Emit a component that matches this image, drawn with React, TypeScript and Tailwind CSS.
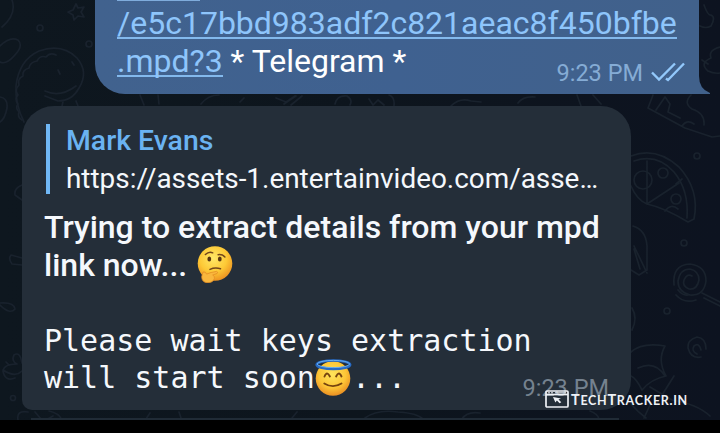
import React from "react";

function Doodles() {
  return (
    <svg className="absolute inset-0" width="720" height="420" viewBox="0 0 720 420" fill="none" stroke="#19222d" strokeWidth="1.7" strokeLinecap="round" strokeLinejoin="round">
      {/* left edge */}
      <path d="M12 0Q17 14 2 27" />
      <path d="M76 4l2 4 6-1-3 5 3 5-6-1-4 4-1-5-5-3 5-2z" />
      <circle cx="40" cy="28" r="3" />
      <circle cx="89" cy="44" r="3" />
      <path d="M0 46Q10 36 18 40Q24 46 14 56Q6 65 0 62" />
      <path d="M24 122Q15 104 16 86Q19 60 39 51Q62 43 77 58Q89 72 79 88Q72 101 58 101L45 96" />
      <path d="M45 91Q60 98 76 86M58 70l2 4M72 62l2 3M63 102l-1 4M76 101l2 5" />
      <path d="M22 120q-5-3-3-8q-4-4-1-8q-4-5 0-9q-4-5 1-10q-2-6 4-9q-1-6 6-8q1-6 8-7q3-6 9-4q4-5 10-2" />
      <path d="M0 97Q8 98 7 108Q5 119 0 122" />
      <path d="M22 185q-8 3-7 10l7 5M22 258l-11-3q-3 4 1 9l10 1" />
      <path d="M0 303Q14 302 15 309Q10 315 0 305" />
      <path d="M22 363q-2-12-8-8q-3 6 3 9q-13 0-14 7q2 11 12 7M3 370q12 8 19 1M9 365l-3-3" />
      <circle cx="13" cy="398" r="2.5" />
      <path d="M18 420q-2-10 10-8M35 412l6 7M49 411q10 2 13 9M53 416l-7 4M146 419l4-6M179 412l2 6" />
      {/* between the bubbles */}
      <path d="M140 95l4 10M158 95l1 9M201 104q7-9 18-9M244 98l-4 4M276 98l10 4 9-6M284 104l12-8M291 105l11-9M335 104q2-9 12-8q6 4 3 9M369 99l4 6 5-5 6 5M394 106q1-9-5-11M451 106q9-9 20-5l10 1M518 103q5-7 17-6M577 95l4 11M593 95l8 9" />
      {/* bottom strip */}
      <path d="M292 418l5-6M365 418q12-9 33-6q20 1 26 8M462 419q5-8 18-6M590 411q8 3 9 8" />
      {/* right edge */}
      <path d="M704 5q4 11 7 10q5 2 0 11q-5 3-11 0M720 47q-12 3-9 11q-12 5-3 13q6 3 12 2M708 64l-6-4" />
      <path d="M653 95l-5 13 37 20 27 9 8-1M656 110l9-13 5 7-2 8 12 6M691 95q-8 8 1 14q13 4 12 16M682 126q5-7 12-2" />
      <path d="M631 156Q656 146 679 167Q700 190 694 219L688 222Q665 208 647 204Q637 200 631 186M634 161Q657 153 674 172Q689 190 687 218M647 161v43M647 204l32-21" />
      <circle cx="643" cy="180" r="9" />
      <circle cx="663" cy="173" r="5" />
      <circle cx="676" cy="199" r="5" />
      <circle cx="697" cy="156" r="3" />
      <path d="M665 211q6-8 13-2M676 184l6-5" />
      <path d="M633 226q13 4 14 20v24l-8 5-8-5M634 246l13 27M634 249l6 20" />
      <circle cx="684" cy="243" r="3" />
      <path d="M674 285q-2-20 16-21q16 2 16 17q-2 15-16 14q-12-3-12-14q2-12 12-12q9 2 9 11q-2 10-10 9q-7-3-5-9q3-7 8-4" />
      <path d="M678 290q5 6 10 5M676 295q8 9 20 5M702 293l18 9M704 298l16 8" />
      <circle cx="667" cy="311" r="3" />
      <path d="M632 308q6 10 0 22M706 349q0-11-9-12q-10 3-9 11q3 11 13 9M701 350q-2-8-7-4q-3 5 3 8" />
      <path d="M631 352Q642 342 665 346Q657 360 666 376Q651 379 642 390Q636 378 631 376M638 368Q655 360 665 376M631 404q7 8 15 14M650 387l22 13q25 4 38 16M650 405l-6 13M674 376l-17 27" />
    </svg>
  );
}

function ThinkingFace() {
  return (
    <svg className="block h-[37px] w-[36px]" viewBox="0 0 36 37">
      <defs>
        <radialGradient id="think" cx="45%" cy="35%" r="65%">
          <stop offset="0" stopColor="#ffe868" />
          <stop offset=".6" stopColor="#fdc936" />
          <stop offset="1" stopColor="#ed9321" />
        </radialGradient>
      </defs>
      <circle cx="18" cy="17.5" r="17.3" fill="url(#think)" />
      <ellipse cx="12.3" cy="13" rx="1.9" ry="2.6" fill="#583512" />
      <ellipse cx="22.8" cy="13" rx="1.9" ry="2.6" fill="#583512" />
      <path d="M8.4 8.5q3.6-3.5 7.3-1.7M21.1 8.7q4.5-.5 6.8 2.2M13 23.4q5-2.3 10.5-.6" fill="none" stroke="#73461a" strokeWidth="1.5" strokeLinecap="round" />
      <path d="M6 26q2.4-.8 3.6 2.1q4-1.9 10-2.7q2 .7.5 2.1l-4.4 1.5q2.5 1.2 1.6 3.8q-1.5 4-7 3.9q-5.5-.4-5.6-6z" fill="#f9b73d" stroke="#e38d25" strokeWidth=".8" strokeLinejoin="round" />
    </svg>
  );
}

function HaloFace() {
  return (
    <svg className="block h-[38px] w-[37px]" viewBox="0 0 37 38">
      <defs>
        <radialGradient id="angel" cx="48%" cy="38%" r="65%">
          <stop offset="0" stopColor="#ffe45b" />
          <stop offset=".6" stopColor="#fdc536" />
          <stop offset="1" stopColor="#e88820" />
        </radialGradient>
      </defs>
      <circle cx="18" cy="19.5" r="17.3" fill="url(#angel)" />
      <path d="M9.5 17.5q2.5-6 5.4 0M21.1 17.5q2.8-6 5.4 0M9.3 24.5q8.7 5.3 17.2 0" fill="none" stroke="#76430f" strokeWidth="1.9" strokeLinecap="round" />
      <ellipse cx="18.4" cy="5.7" rx="16.7" ry="4.2" fill="none" stroke="#286bc5" strokeWidth="2.7" />
      <ellipse cx="18.4" cy="5" rx="16.2" ry="3.6" fill="none" stroke="#69aef0" strokeWidth="1" />
    </svg>
  );
}

function SentBubble() {
  return (
    <div className="relative ml-[95px] h-[94px] w-[604px] rounded-bl-[30px] bg-linear-to-r from-[#41628e] via-[#3f6190] to-[#41618b] pl-[22px]">
      <div className="h-px w-[83px] bg-[#7facdc]" />
      <div className="mt-[3px] h-[38px] whitespace-nowrap text-[32px] leading-[38px] text-[#8ec5fb]">
        <span className="inline-block h-[35px] border-b-2 border-[#83b9ed]">/e5c17bbd983adf2c821aeac8f450bfbe</span>
      </div>
      <div className="flex justify-between">
        <div className="h-[38px] whitespace-nowrap text-[32px] leading-[38px] text-white">
          <span className="inline-block h-[35px] border-b-2 border-[#83b9ed] text-[#8ec5fb]">.mpd?3</span> * Telegram *
        </div>
        <div className="mr-[14px] mt-[17px] flex h-[28px] gap-[8px]">
          <span className="text-[23.5px] leading-[28px] text-[#85acd5]">9:23 PM</span>
          <svg className="mt-[3px]" width="34" height="21" viewBox="0 0 34 21" fill="none" stroke="#92c8fb" strokeWidth="2.4">
            <path d="M1 10.5l7 7L24 1.5M15 16.5l2 1.5L33 1.5" />
          </svg>
        </div>
      </div>
      <svg className="absolute bottom-0 left-[603px]" width="13" height="30" viewBox="0 0 13 30">
        <path d="M0 0h1v12Q1 25 12 29v1H0z" fill="#41618b" />
      </svg>
    </div>
  );
}

function ReceivedBubble() {
  return (
    <div className="relative ml-[22px] mt-[12px] h-[304px] w-[609px] rounded-bl-[10px] rounded-br-[30px] rounded-tl-[32px] rounded-tr-[30px] bg-[#242e39] pl-[22px] pt-[18px] text-[#f5f8fc]">
      <div className="ml-[2px] h-[70px] border-l-[4px] border-[#70b7f5] pl-[16px]">
        <div className="h-[36px] whitespace-nowrap text-[28.4px] font-medium leading-[34px] text-[#6ab3f2]">Mark Evans</div>
        <div className="whitespace-nowrap text-[27.9px] leading-[38px]">https://assets-1.entertainvideo.com/asse…</div>
      </div>
      <div className="mt-[14px] whitespace-nowrap text-[32px] font-medium leading-[38px]">
        <div>Trying to extract details from your mpd</div>
        <div className="flex gap-[10px]"><span>link now...</span><ThinkingFace /></div>
      </div>
      <div className="mt-[38px] whitespace-nowrap font-['DejaVu_Sans_Mono','Liberation_Mono',monospace] text-[30px] leading-[37px]">
        <div>Please wait keys extraction</div>
        <div className="flex"><span>will start soon</span><HaloFace /><span>...</span></div>
      </div>
      <div className="absolute bottom-[8px] right-[22px] text-[23.5px] leading-[28px] text-[#75828f]">9:23 PM</div>
    </div>
  );
}

function Watermark() {
  return (
    <div className="absolute left-[545px] top-[390px] flex items-end gap-[2px] text-[#eef1f6]">
      <svg width="24" height="18" viewBox="0 0 24 18" fill="none" stroke="currentColor" strokeWidth="1.7">
        <rect x="1" y="1" width="22" height="16" rx="1" />
        <path d="M1 4.5h22" />
        <path d="M3 2.8h2m1 0h2m2 0h11" strokeWidth="1" />
        <path d="M8 7l8 1.4-2.5 1.1 2.8 2.8-1.7 1-2.7-2.7-1.5 1.8z" fill="currentColor" stroke="none" />
      </svg>
      <div className="whitespace-nowrap font-['Lato','Open_Sans',sans-serif] text-[14.5px] font-bold leading-[14px] tracking-[0.7px]">
        T<span className="text-[12.5px]">ECH</span>T<span className="text-[12.5px]">RACKER.IN</span>
      </div>
    </div>
  );
}

export default function App() {
  return (
    <main className="relative h-[433px] w-[720px] overflow-hidden bg-black font-['Roboto','Noto_Sans',sans-serif]">
      <div className="relative h-[420px] bg-linear-to-r from-[#0e171f] via-[#0d151d] to-[#0d1320]">
        <Doodles />
        <SentBubble />
        <ReceivedBubble />
        <div className="relative ml-[31px] mt-[8px] h-[2px] w-[588px] bg-[#202b36]" />
      </div>
      <Watermark />
    </main>
  );
}
